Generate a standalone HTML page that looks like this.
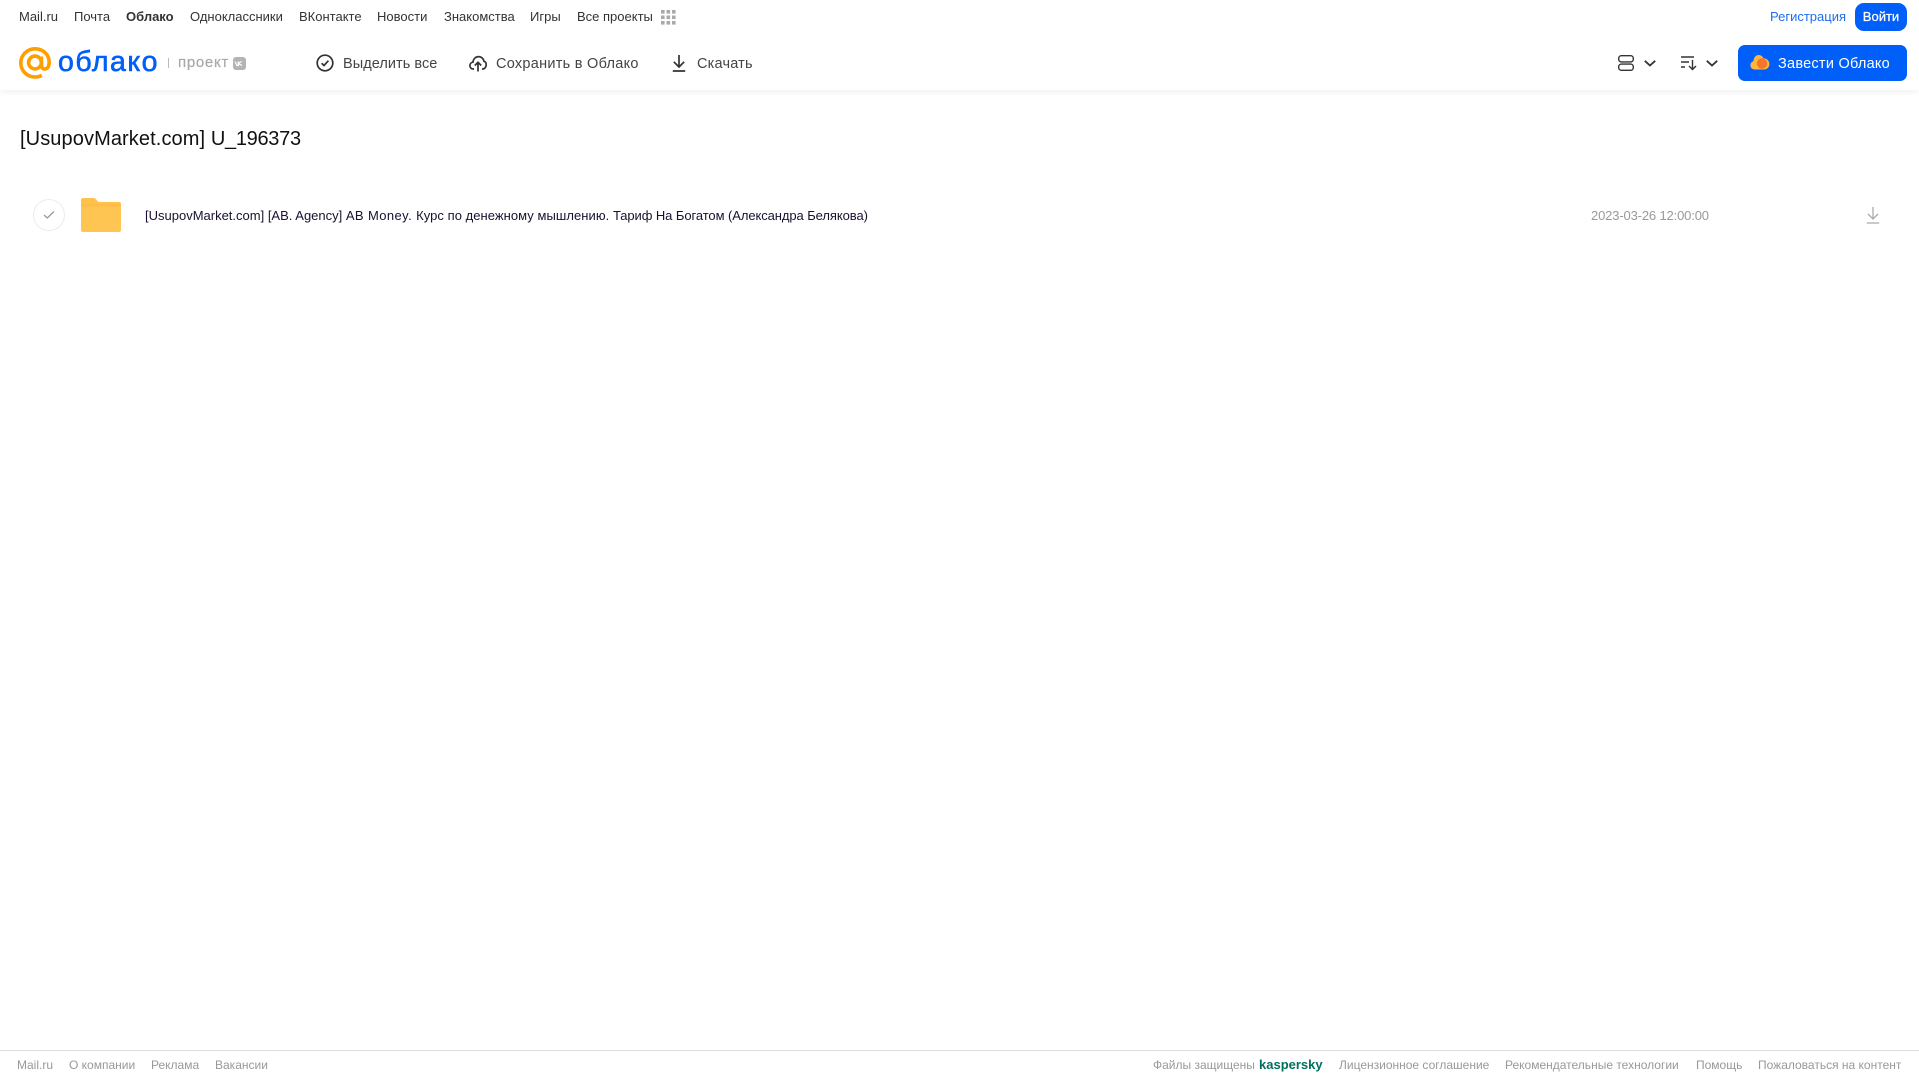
<!DOCTYPE html>
<html lang="ru"><head><meta charset="utf-8"><title>Облако</title>
<style>
html,body{margin:0;padding:0;background:#fff;width:1919px;height:1079px;overflow:hidden}
body{font-family:"Liberation Sans",sans-serif;position:relative}
.t{position:absolute;white-space:nowrap;line-height:20px}
.n{top:7px;font-size:13px;color:#333}
.b{top:53.5px;font-size:14.5px;color:#444}
.f{top:1055px;font-size:12px;color:#999}
svg{position:absolute;overflow:visible}
</style></head><body>
<div style="position:absolute;left:0;top:0;width:1919px;height:90px;background:#fff;box-shadow:0 2px 6px rgba(0,0,0,.06)"></div>

<div class="t n" style="left:19px">Mail.ru</div>
<div class="t n" style="left:74px">Почта</div>
<div class="t n" style="left:126px;font-weight:bold">Облако</div>
<div class="t n" style="left:190px">Одноклассники</div>
<div class="t n" style="left:299px">ВКонтакте</div>
<div class="t n" style="left:377px">Новости</div>
<div class="t n" style="left:444px">Знакомства</div>
<div class="t n" style="left:530px">Игры</div>
<div class="t n" style="left:577px">Все проекты</div>
<svg style="left:661px;top:10px" width="15" height="15" fill="#aaa"><rect x="0" y="0" width="3.6" height="3.6"/><rect x="5.5" y="0" width="3.6" height="3.6"/><rect x="11" y="0" width="3.6" height="3.6"/><rect x="0" y="5.5" width="3.6" height="3.6"/><rect x="5.5" y="5.5" width="3.6" height="3.6"/><rect x="11" y="5.5" width="3.6" height="3.6"/><rect x="0" y="11" width="3.6" height="3.6"/><rect x="5.5" y="11" width="3.6" height="3.6"/><rect x="11" y="11" width="3.6" height="3.6"/></svg>

<svg style="left:19px;top:47px" width="33" height="32" fill="none" stroke="#ff9e00" stroke-width="3.6"><circle cx="16" cy="15.500" r="6.400"/><path d="M22.400 9.500v8.500c0 2.600 1.600 4 3.400 4 2.500 0 4.400-2.600 4.400-6.500C30.200 7.400 24 1.800 16 1.800 8 1.800 1.800 8.400 1.800 16S8 30 16 30c2.600 0 4.800-.5 6.800-1.600"/></svg>
<div class="t" style="left:58px;top:46px;line-height:32px;font-size:28.5px;color:#005ff9;-webkit-text-stroke:.6px #005ff9;letter-spacing:1.5px">облако</div>
<div style="position:absolute;left:168px;top:58px;width:1px;height:10px;background:#bbb"></div>
<div class="t" style="left:178px;top:53px;font-size:15px;color:#a8a8a8;-webkit-text-stroke:.2px #a8a8a8;letter-spacing:.7px">проект</div>
<div style="position:absolute;left:233px;top:57px;width:13px;height:13px;border-radius:3px;background:#b4b4b4"></div>
<svg style="left:233px;top:57px" width="13" height="13" fill="none" stroke="#fff" stroke-width="1.200"><path d="M2 4.500 4 8.500 5.300 8.500V4.500M5.300 6.500 8.500 4.500M5.300 6.500 9 8.500"/></svg>

<svg style="left:316px;top:54px" width="18" height="18" fill="none" stroke="#333" stroke-width="1.700"><circle cx="9" cy="9" r="7.800"/><path d="M5.600 9.200 8 11.500 12.400 6.700"/></svg>
<div class="t b" style="left:343px;letter-spacing:.05px">Выделить все</div>
<svg style="left:469px;top:54px" width="18" height="18" fill="none" stroke="#333" stroke-width="1.700"><path d="M5 15H4.200C2 15 .9 13.300.9 11.600c0-1.800 1.300-3.200 3-3.400C4.300 5 6.600 2.600 9.600 2.600c2.700 0 4.900 2 5.300 4.600 1.500.4 2.300 1.900 2.300 3.600 0 2.200-1.400 4.200-3.700 4.200H13"/><path d="M9 17.500V8.500M5.800 11.500 9 8.300l3.200 3.200"/></svg>
<div class="t b" style="left:496px;letter-spacing:.27px">Сохранить в Облако</div>
<svg style="left:672px;top:54px" width="14" height="18" fill="none" stroke="#333" stroke-width="1.700"><path d="M7 1v11.500M1.800 7.800 7 13l5.200-5.200M.8 17h12.400"/></svg>
<div class="t b" style="left:697px;letter-spacing:.2px">Скачать</div>

<svg style="left:1618px;top:55px" width="16" height="16" fill="none" stroke="#333" stroke-width="1.400"><rect x=".7" y=".7" width="14.600" height="6.200" rx="2.600"/><rect x=".7" y="9.100" width="14.600" height="6.200" rx="2.600"/></svg>
<svg style="left:1644px;top:60px" width="12" height="7" fill="none" stroke="#333" stroke-width="1.800"><path d="M.8.8 6 5.500 11.200.8"/></svg>
<svg style="left:1681px;top:55px" width="16" height="16" fill="none" stroke="#333" stroke-width="1.400"><path d="M0 2h13M0 7h8M0 12h4M11.500 5v9.500M8 11l3.500 3.500L15 11"/></svg>
<svg style="left:1706px;top:60px" width="12" height="7" fill="none" stroke="#333" stroke-width="1.800"><path d="M.8.8 6 5.500 11.200.8"/></svg>

<div class="t" style="left:1770px;top:7px;font-size:13px;color:#1a6ff0">Регистрация</div>
<div style="position:absolute;left:1855px;top:3px;width:52px;height:28px;border-radius:9px;background:#005ff9"></div>
<div class="t" style="left:1855px;top:7px;width:52px;text-align:center;font-size:13px;color:#fff;-webkit-text-stroke:.25px #fff">Войти</div>
<div style="position:absolute;left:1738px;top:45px;width:169px;height:36px;border-radius:7px;background:#005ff9"></div>
<svg style="left:1750px;top:54px" width="20" height="16"><path d="M5 15.500C2 15.500.4 13.600.4 11.300c0-2 1.200-3.500 3-4C3.800 3.300 6 1 8.600 1c2.300 0 4 1.300 4.800 3.200 3.400 0 6 2.600 6 5.800 0 3.200-2.400 5.500-5.500 5.500z" fill="#ffb43a"/><circle cx="12" cy="9.500" r="5.200" fill="#f5752b"/></svg>
<div class="t b" style="left:1778px;color:#fff;letter-spacing:.25px">Завести Облако</div>

<div class="t" style="left:20px;top:127px;line-height:24px;font-size:20px;color:#111"><span style="letter-spacing:.1px">[UsupovMarket.com] </span><span style="letter-spacing:-.3px">U_196373</span></div>

<div style="position:absolute;left:33px;top:199px;width:30px;height:30px;border:1px solid #ececec;border-radius:50%"></div>
<svg style="left:43px;top:210px" width="12" height="10" fill="none" stroke="#999" stroke-width="1.300"><path d="M1 5 4.300 8 11 1.500"/></svg>
<svg style="left:81px;top:198px" width="40" height="34"><path d="M2 0h10c2 0 3 .8 4 2.500.6 1 1.400 1.500 3 1.500h19c1.200 0 2 .8 2 2v3H0V2C0 .8.800 0 2 0z" fill="#ffc24d"/><path d="M0 8h40v24c0 1.200-.8 2-2 2H2c-1.200 0-2-.8-2-2z" fill="#ffc552"/><rect y="6" width="40" height="2.500" fill="#ffbd45"/></svg>
<div class="t" style="left:145px;top:206px;font-size:13px;color:#1a1030"><span style="letter-spacing:0">[UsupovMarket.com] [AB. Agency] </span><span style="letter-spacing:.4px">AB Money. </span><span style="letter-spacing:.05px">Курс по денежному мышлению. </span><span style="letter-spacing:-.08px">Тариф На Богатом (Александра Белякова)</span></div>
<div class="t" style="left:1591px;top:206px;font-size:13px;letter-spacing:-.15px;color:#999">2023-03-26 12:00:00</div>
<svg style="left:1866px;top:206px" width="14" height="18" fill="none" stroke="#aaa" stroke-width="1.300"><path d="M7 1v11.500M2 8l5 5 5-5M.8 17h12.400"/></svg>

<div style="position:absolute;left:0;top:1050px;width:1919px;height:1px;background:#ddd"></div>
<div class="t f" style="left:17px">Mail.ru</div>
<div class="t f" style="left:69px">О компании</div>
<div class="t f" style="left:151px">Реклама</div>
<div class="t f" style="left:215px">Вакансии</div>
<div class="t f" style="left:1153px">Файлы защищены</div>
<div class="t f" style="left:1259px;font-size:13px;font-weight:bold;color:#00705f">kaspersky</div>
<div class="t f" style="left:1339px">Лицензионное соглашение</div>
<div class="t f" style="left:1505px">Рекомендательные технологии</div>
<div class="t f" style="left:1696px">Помощь</div>
<div class="t f" style="left:1758px">Пожаловаться на контент</div>
</body></html>
